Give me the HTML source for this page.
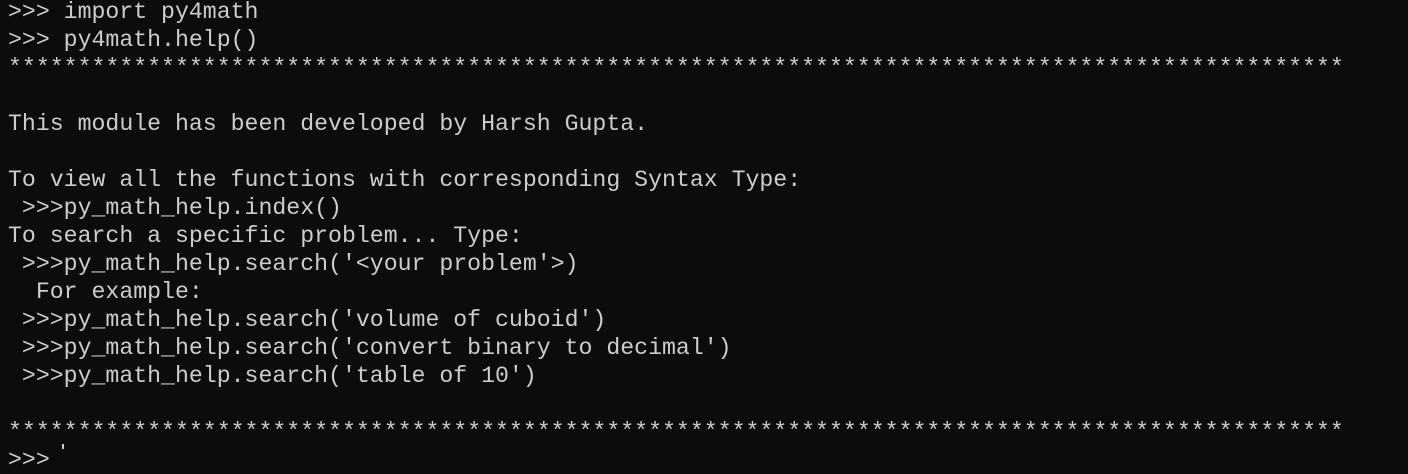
<!DOCTYPE html>
<html><head><meta charset="utf-8"><style>
html,body{margin:0;padding:0;background:#0c0c0c;width:1408px;height:449px;overflow:hidden}
pre{margin:0;position:absolute;left:8px;top:-2px;font-family:"Liberation Mono",monospace;font-size:23.2px;line-height:28px;color:#cccccc;white-space:pre}
.cur{position:absolute;left:62px;top:444px;width:2px;height:5px;background:#ccc}
</style></head><body>
<pre>&gt;&gt;&gt; import py4math
&gt;&gt;&gt; py4math.help()
************************************************************************************************

This module has been developed by Harsh Gupta.

To view all the functions with corresponding Syntax Type:
 &gt;&gt;&gt;py_math_help.index()
To search a specific problem... Type:
 &gt;&gt;&gt;py_math_help.search('&lt;your problem'&gt;)
  For example:
 &gt;&gt;&gt;py_math_help.search('volume of cuboid')
 &gt;&gt;&gt;py_math_help.search('convert binary to decimal')
 &gt;&gt;&gt;py_math_help.search('table of 10')

************************************************************************************************
&gt;&gt;&gt; </pre>
<div class="cur"></div>
</body></html>
